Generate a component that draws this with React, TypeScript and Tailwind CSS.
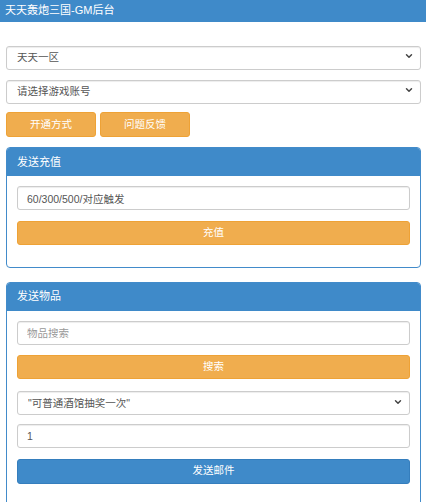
import { ChevronDown } from 'lucide-react'

const font = { fontFamily: '"Liberation Sans", "Noto Sans CJK SC", sans-serif' }

// Select box with custom chevron
function SelectBox({ value, className = '' }: { value: string; className?: string }) {
  return (
    <div className={`relative h-[24px] ${className}`}>
      <select
        defaultValue={value}
        className="appearance-none w-full h-full rounded-[3px] border border-[#cccccc] bg-white pl-[10px] pr-6 text-[10.5px] text-[#555555] outline-none shadow-[inset_0_1px_1px_rgba(0,0,0,0.075)]"
      >
        <option>{value}</option>
      </select>
      <ChevronDown className="absolute right-[7px] top-[7px] w-[10px] h-[10px] text-[#444444] pointer-events-none" strokeWidth={3.5} />
    </div>
  )
}

function TextInput({ value, placeholder }: { value?: string; placeholder?: string }) {
  return (
    <input
      defaultValue={value}
      placeholder={placeholder}
      className="w-full h-[24px] rounded-[3px] border border-[#cccccc] bg-white px-[9px] text-[10.5px] text-[#555555] placeholder:text-[#999999] outline-none shadow-[inset_0_1px_1px_rgba(0,0,0,0.075)]"
    />
  )
}

function Panel({ title, children }: { title: string; children: React.ReactNode }) {
  return (
    <div className="rounded-[4px] border border-[#428bca] bg-white overflow-hidden">
      <div className="h-[28px] bg-[#3f8ac9] flex items-center px-[10px] text-[11px] text-white">{title}</div>
      <div className="px-[10px] pt-[10px] pb-[22px] flex flex-col gap-[10.5px]">{children}</div>
    </div>
  )
}

export default function App() {
  return (
    <div className="w-[426px] h-[502px] overflow-hidden bg-white" style={font}>
      {/* Top bar */}
      <header className="h-[22px] bg-[#3f8ac9] flex items-center pl-[5px] pb-[2px] text-[11px] text-white">
        天天轰炮三国-GM后台
      </header>

      <div className="pl-[6px] pr-[5px] pt-[22px]">
        <SelectBox value="天天一区" />
        <SelectBox value="请选择游戏账号" className="mt-[10px]" />

        <div className="mt-[10px] flex gap-[4px]">
          <button className="w-[90px] h-[25px] rounded-[3px] bg-[#f0ad4e] border border-[#eea236] text-[10.5px] text-white">开通方式</button>
          <button className="w-[90px] h-[25px] rounded-[3px] bg-[#f0ad4e] border border-[#eea236] text-[10.5px] text-white">问题反馈</button>
        </div>

        {/* Recharge */}
        <div className="mt-[10px]">
          <Panel title="发送充值">
            <TextInput value="60/300/500/对应触发" />
            <button className="w-full h-[24px] rounded-[3px] bg-[#f0ad4e] border border-[#eea236] text-[10.5px] text-white">充值</button>
          </Panel>
        </div>

        {/* Items */}
        <div className="mt-[14px]">
          <Panel title="发送物品">
            <TextInput placeholder="物品搜索" />
            <button className="w-full h-[24px] rounded-[3px] bg-[#f0ad4e] border border-[#eea236] text-[10.5px] text-white">搜索</button>
            <SelectBox value={'"可普通酒馆抽奖一次"'} />
            <TextInput value="1" />
            <button className="w-full h-[25px] rounded-[3px] bg-[#3f8ac9] border border-[#357ebd] text-[10.5px] text-white">发送邮件</button>
          </Panel>
        </div>
      </div>
    </div>
  )
}
